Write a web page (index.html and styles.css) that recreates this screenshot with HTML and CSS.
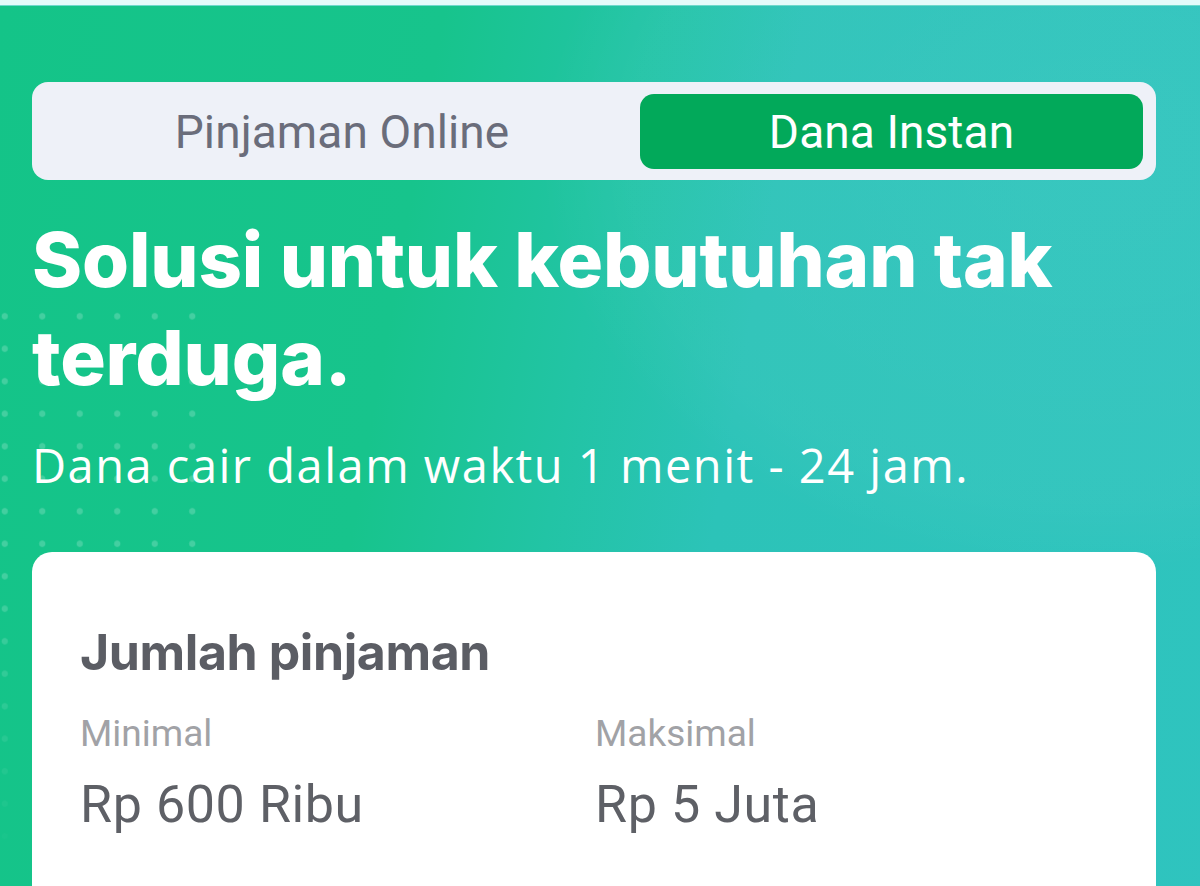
FILE: index.html
```html
<!DOCTYPE html>
<html lang="id">
<head>
<meta charset="utf-8">
<title>Dana Instan</title>
<link rel="stylesheet" href="styles.css">
</head>
<body>
<div class="topline"></div>
<main class="hero">
  <div class="dots"></div>
  <div class="glow"></div>
  <nav class="toggle">
    <div class="tab">Pinjaman Online</div>
    <div class="tab active">Dana Instan</div>
  </nav>
  <h1 class="title">Solusi untuk kebutuhan tak terduga.</h1>
  <p class="subtitle">Dana cair dalam waktu 1 menit - 24 jam.</p>
  <section class="card">
    <h2 class="card-title">Jumlah pinjaman</h2>
    <div class="range">
      <div class="range-item">
        <div class="label">Minimal</div>
        <div class="value">Rp 600 Ribu</div>
      </div>
      <div class="range-item">
        <div class="label">Maksimal</div>
        <div class="value">Rp 5 Juta</div>
      </div>
    </div>
  </section>
</main>
</body>
</html>
```
FILE: styles.css
```css
html, body {
  margin: 0;
  padding: 0;
  height: 100%;
  overflow: hidden;
}
body {
  font-family: Roboto, "Liberation Sans", sans-serif;
  background: #2fc4bf;
}
.topline {
  height: 5px;
  background: #e4fbfa;
  border-bottom: 1px solid #6fd9cc;
}
.hero {
  position: relative;
  min-height: 880px;
  padding: 76px 44px 0 32px;
  box-sizing: border-box;
  background: linear-gradient(100deg, #14c488 0%, #17c48c 32%, #22c4a5 46%, #2cc3b8 58%, #2fc4bf 100%);
  overflow: hidden;
}
.glow {
  position: absolute;
  left: 545px;
  top: -260px;
  width: 1100px;
  height: 820px;
  border-radius: 50%;
  background: radial-gradient(ellipse at center, rgba(255,255,255,0.05) 0%, rgba(255,255,255,0.03) 60%, rgba(255,255,255,0) 72%);
  pointer-events: none;
}
.dots {
  position: absolute;
  left: -14px;
  top: 294px;
  width: 230px;
  height: 600px;
  background-image: radial-gradient(circle, rgba(255,255,255,0.2) 2.8px, rgba(255,255,255,0) 3.6px);
  background-size: 37.5px 32.5px;
  -webkit-mask-image: linear-gradient(180deg, #000 0%, #000 45%, rgba(0,0,0,0.45) 70%, transparent 95%);
  mask-image: linear-gradient(180deg, #000 0%, #000 45%, rgba(0,0,0,0.45) 70%, transparent 95%);
  pointer-events: none;
}
.toggle {
  position: relative;
  display: flex;
  height: 98px;
  box-sizing: border-box;
  padding: 12px 13px 11px 12px;
  background: #eef1f8;
  border-radius: 16px;
}
.tab {
  flex: 1;
  display: flex;
  align-items: center;
  justify-content: center;
  font-size: 46px;
  color: #6a6d7b;
  letter-spacing: 0.1px;
}
.tab.active {
  flex: 0 0 503px;
  background: #02a95a;
  color: #ffffff;
  border-radius: 14px;
}
.title {
  position: relative;
  margin: 30px 0 0 0;
  font-family: Inter, "Liberation Sans", sans-serif;
  font-weight: 800;
  font-size: 76px;
  line-height: 98px;
  color: #ffffff;
  letter-spacing: -0.15px;
  max-width: 1070px;
}
.subtitle {
  position: relative;
  margin: 32px 0 0 0;
  font-family: "Open Sans", Roboto, sans-serif;
  font-size: 47px;
  line-height: 54px;
  color: #ffffff;
  font-weight: 400;
  letter-spacing: 1.5px;
}
.card {
  position: relative;
  margin-top: 60px;
  background: #ffffff;
  border-radius: 20px;
  padding: 72px 48px 60px 48px;
  min-height: 400px;
}
.card-title {
  margin: 0;
  font-family: Inter, "Liberation Sans", sans-serif;
  font-weight: 700;
  font-size: 50px;
  line-height: 56px;
  color: #5b5d64;
  letter-spacing: -0.4px;
}
.range {
  display: grid;
  grid-template-columns: 515px 1fr;
  margin-top: 32px;
}
.label {
  font-size: 37px;
  line-height: 44px;
  color: #a1a2a6;
}
.value {
  margin-top: 20px;
  font-size: 52px;
  line-height: 58px;
  color: #5e6066;
  letter-spacing: 0.6px;
}
```
